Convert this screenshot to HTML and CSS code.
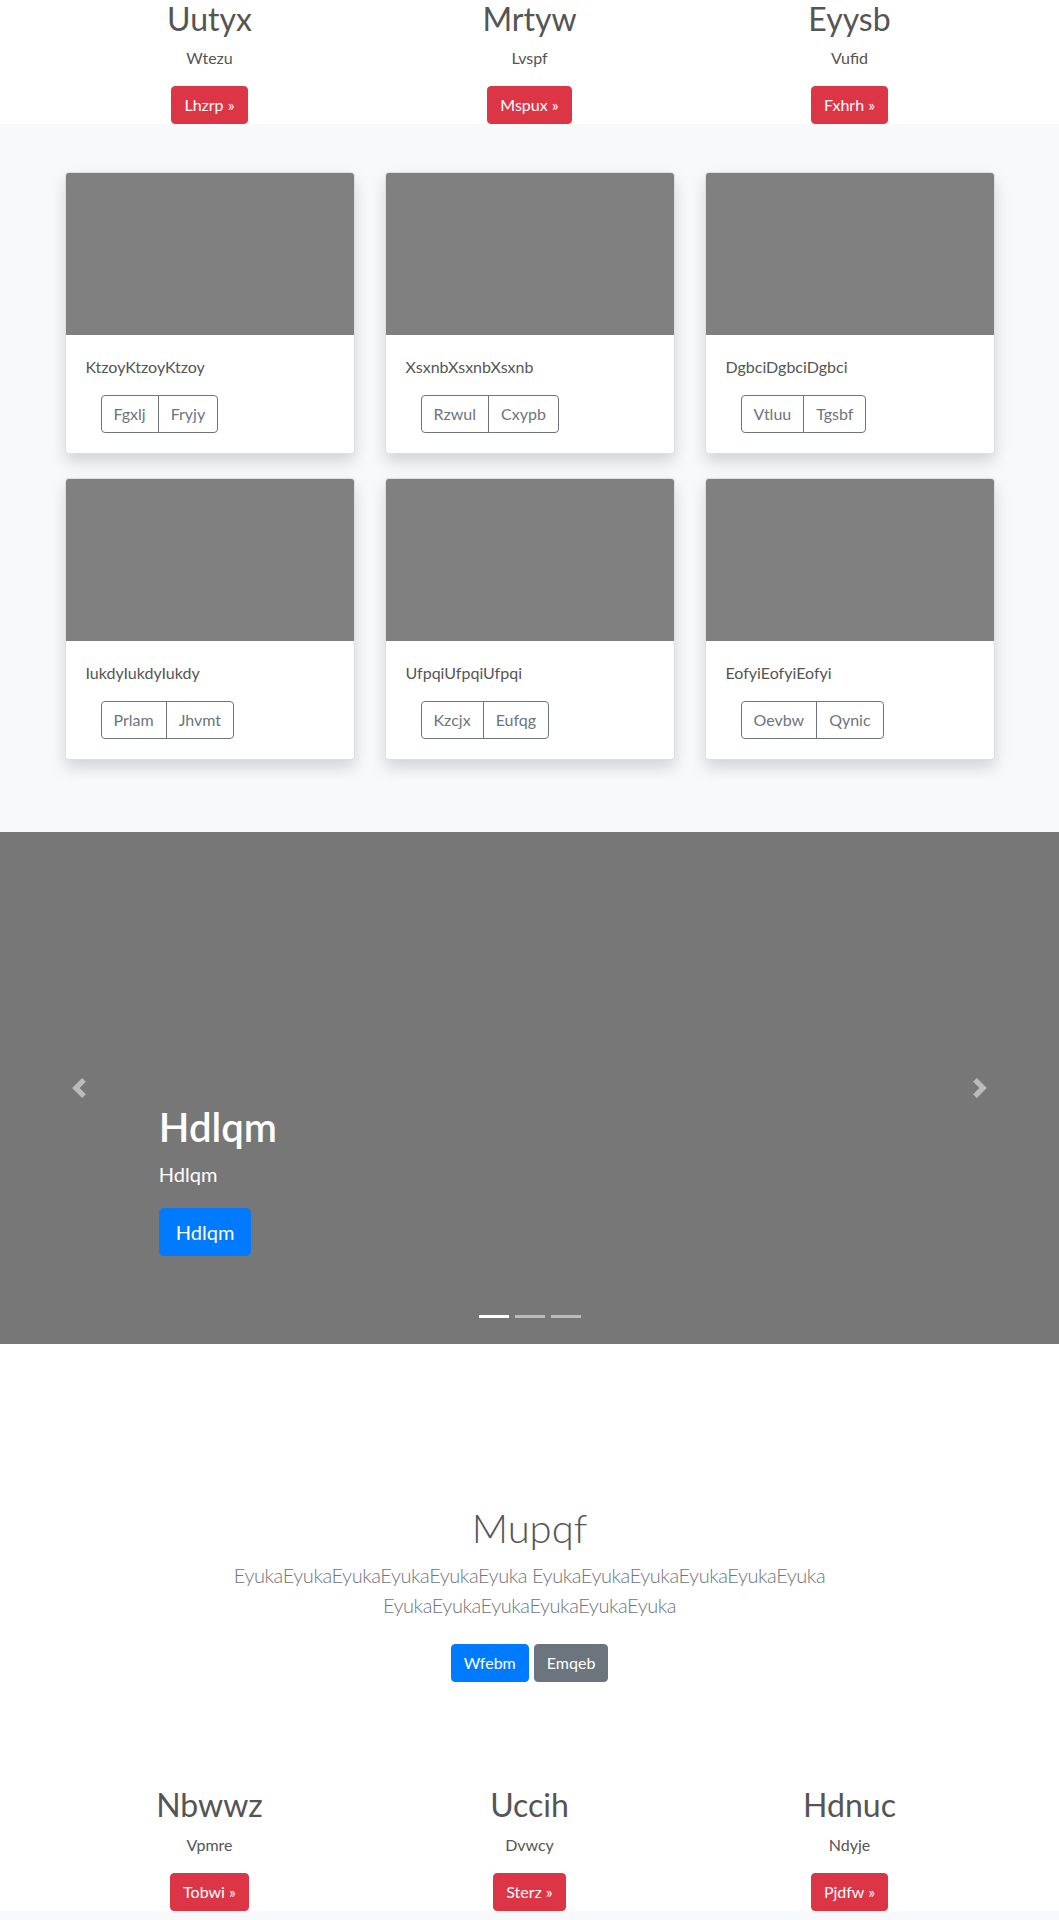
FILE: index.html
```html
<!DOCTYPE html>
<html lang="en">
<head>
<meta charset="utf-8">
<title>Page</title>
<link rel="stylesheet" href="styles.css">
</head>
<body>
<section class="features">
  <div class="container trio">
    <div class="feature"><h2>Uutyx</h2><p>Wtezu</p><a class="btn btn-danger" href="#">Lhzrp &raquo;</a></div>
    <div class="feature"><h2>Mrtyw</h2><p>Lvspf</p><a class="btn btn-danger" href="#">Mspux &raquo;</a></div>
    <div class="feature"><h2>Eyysb</h2><p>Vufid</p><a class="btn btn-danger" href="#">Fxhrh &raquo;</a></div>
  </div>
</section>

<section class="album">
  <div class="container cards">
    <div class="card">
      <div class="card-img"></div>
      <div class="card-body">
        <p class="card-text">KtzoyKtzoyKtzoy</p>
        <div class="btn-row"><div class="btn-group"><button class="btn btn-outline" type="button">Fgxlj</button><button class="btn btn-outline" type="button">Fryjy</button></div></div>
      </div>
    </div>
    <div class="card">
      <div class="card-img"></div>
      <div class="card-body">
        <p class="card-text">XsxnbXsxnbXsxnb</p>
        <div class="btn-row"><div class="btn-group"><button class="btn btn-outline" type="button">Rzwul</button><button class="btn btn-outline" type="button">Cxypb</button></div></div>
      </div>
    </div>
    <div class="card">
      <div class="card-img"></div>
      <div class="card-body">
        <p class="card-text">DgbciDgbciDgbci</p>
        <div class="btn-row"><div class="btn-group"><button class="btn btn-outline" type="button">Vtluu</button><button class="btn btn-outline" type="button">Tgsbf</button></div></div>
      </div>
    </div>
    <div class="card">
      <div class="card-img"></div>
      <div class="card-body">
        <p class="card-text">IukdyIukdyIukdy</p>
        <div class="btn-row"><div class="btn-group"><button class="btn btn-outline" type="button">Prlam</button><button class="btn btn-outline" type="button">Jhvmt</button></div></div>
      </div>
    </div>
    <div class="card">
      <div class="card-img"></div>
      <div class="card-body">
        <p class="card-text">UfpqiUfpqiUfpqi</p>
        <div class="btn-row"><div class="btn-group"><button class="btn btn-outline" type="button">Kzcjx</button><button class="btn btn-outline" type="button">Eufqg</button></div></div>
      </div>
    </div>
    <div class="card">
      <div class="card-img"></div>
      <div class="card-body">
        <p class="card-text">EofyiEofyiEofyi</p>
        <div class="btn-row"><div class="btn-group"><button class="btn btn-outline" type="button">Oevbw</button><button class="btn btn-outline" type="button">Qynic</button></div></div>
      </div>
    </div>
  </div>
</section>

<section class="carousel">
  <ol class="carousel-indicators">
    <li class="active"></li>
    <li></li>
    <li></li>
  </ol>
  <div class="carousel-caption">
    <h1>Hdlqm</h1>
    <p class="caption-sub">Hdlqm</p>
    <div class="caption-actions"><a class="btn btn-lg btn-primary" href="#">Hdlqm</a></div>
  </div>
  <a class="carousel-control prev" href="#" aria-label="Previous">
    <svg width="20" height="20" viewBox="0 0 8 8" fill="#fff"><path d="M5.25 0l-4 4 4 4 1.5-1.5L4.25 4l2.5-2.5L5.25 0z"/></svg>
  </a>
  <a class="carousel-control next" href="#" aria-label="Next">
    <svg width="20" height="20" viewBox="0 0 8 8" fill="#fff"><path d="M2.75 0l-1.5 1.5L3.75 4l-2.5 2.5L2.75 8l4-4-4-4z"/></svg>
  </a>
</section>

<section class="jumbo-wrap">
  <div class="jumbotron">
    <div class="narrow">
      <h1>Mupqf</h1>
      <p class="lead">EyukaEyukaEyukaEyukaEyukaEyuka EyukaEyukaEyukaEyukaEyukaEyuka EyukaEyukaEyukaEyukaEyukaEyuka</p>
      <div class="actions"><a class="btn btn-primary" href="#">Wfebm</a><a class="btn btn-secondary" href="#">Emqeb</a></div>
    </div>
  </div>
</section>

<section class="features">
  <div class="container trio">
    <div class="feature"><h2>Nbwwz</h2><p>Vpmre</p><a class="btn btn-danger" href="#">Tobwi &raquo;</a></div>
    <div class="feature"><h2>Uccih</h2><p>Dvwcy</p><a class="btn btn-danger" href="#">Sterz &raquo;</a></div>
    <div class="feature"><h2>Hdnuc</h2><p>Ndyje</p><a class="btn btn-danger" href="#">Pjdfw &raquo;</a></div>
  </div>
</section>

<footer class="footer-band"></footer>
</body>
</html>
```

FILE: styles.css
```css
* {
  box-sizing: border-box;
}

html,
body {
  margin: 0;
  padding: 0;
}

body {
  font-family: Lato, "Segoe UI", Roboto, "Liberation Sans", sans-serif;
  font-size: 16px;
  line-height: 1.5;
  color: #555;
  background: #fff;
}

.container {
  width: 960px;
  margin: 0 auto;
  padding: 0 15px;
}

/* three column features */
.trio {
  display: grid;
  grid-template-columns: repeat(3, 290px);
  column-gap: 30px;
}

.feature {
  display: flex;
  flex-direction: column;
  align-items: center;
  text-align: center;
}

.feature h2 {
  font-size: 32px;
  font-weight: 400;
  line-height: 1.2;
  margin: 0 0 8px;
}

.feature p {
  margin: 0 0 16px;
}

/* buttons */
.btn {
  display: inline-block;
  font-family: inherit;
  font-size: 16px;
  font-weight: 400;
  line-height: 1.5;
  padding: 6px 12px;
  border: 1px solid transparent;
  border-radius: 4px;
  text-decoration: none;
  text-align: center;
  cursor: pointer;
  background: transparent;
}

.btn-danger {
  background: #dc3545;
  border-color: #dc3545;
  color: #fff;
}

.btn-primary {
  background: #007bff;
  border-color: #007bff;
  color: #fff;
}

.btn-secondary {
  background: #6c757d;
  border-color: #6c757d;
  color: #fff;
}

.btn-outline {
  color: #6c757d;
  border-color: #6c757d;
  background: transparent;
}

.btn-lg {
  font-size: 20px;
  padding: 8px 16px;
  border-radius: 4.8px;
}

/* album */
.album {
  background: #f8f9fa;
  padding: 48px 0 72px;
}

.cards {
  display: grid;
  grid-template-columns: repeat(3, 290px);
  column-gap: 30px;
  row-gap: 24px;
}

.card {
  background: #fff;
  border: 1px solid rgba(0, 0, 0, 0.125);
  border-radius: 4px;
  overflow: hidden;
  box-shadow: 0 8px 16px rgba(0, 0, 0, 0.15);
}

.card-img {
  height: 162px;
  background: #808080;
}

.card-body {
  padding: 20px;
}

.card-text {
  margin: 0 0 16px;
}

.btn-row {
  display: flex;
  padding-left: 15px;
}

.btn-group {
  display: inline-flex;
}

.btn-group .btn + .btn {
  margin-left: -1px;
}

.btn-group .btn:first-child {
  border-radius: 4px 0 0 4px;
}

.btn-group .btn:last-child {
  border-radius: 0 4px 4px 0;
}

/* carousel */
.carousel {
  position: relative;
  height: 512px;
  background: #777;
  margin-bottom: 64px;
  overflow: hidden;
}

.carousel-indicators {
  position: absolute;
  left: 15%;
  right: 15%;
  bottom: 0;
  display: flex;
  justify-content: center;
  list-style: none;
  margin: 0 0 16px;
  padding: 0;
  z-index: 15;
}

.carousel-indicators li {
  box-sizing: content-box;
  width: 30px;
  height: 3px;
  margin: 0 3px;
  background: #fff;
  background-clip: padding-box;
  border-top: 10px solid transparent;
  border-bottom: 10px solid transparent;
  opacity: 0.5;
}

.carousel-indicators li.active {
  opacity: 1;
}

.carousel-caption {
  position: absolute;
  left: 15%;
  right: 15%;
  bottom: 48px;
  padding: 20px 0;
  color: #fff;
  text-align: left;
  z-index: 10;
}

.carousel-caption h1 {
  font-size: 40px;
  font-weight: 600;
  line-height: 1.2;
  margin: 0 0 8px;
}

.caption-sub {
  font-size: 20px;
  line-height: 1.5;
  margin: 0 0 19px;
}

.caption-actions {
  display: flex;
  margin-bottom: 20px;
}

.carousel-control {
  position: absolute;
  top: 0;
  bottom: 0;
  width: 15%;
  display: flex;
  align-items: center;
  justify-content: center;
  opacity: 0.5;
  z-index: 5;
}

.carousel-control.prev {
  left: 0;
}

.carousel-control.next {
  right: 0;
}

/* jumbotron */
.jumbo-wrap {
  padding: 48px 0;
}

.jumbotron {
  padding: 48px 0;
  text-align: center;
}

.narrow {
  max-width: 660px;
  margin: 0 auto;
  padding: 0 15px;
}

.jumbotron h1 {
  font-size: 40px;
  font-weight: 300;
  line-height: 1.2;
  margin: 0 0 8px;
}

.lead {
  font-size: 20px;
  font-weight: 300;
  line-height: 1.5;
  letter-spacing: -0.45px;
  color: #6c757d;
  margin: 0 0 16px;
}

.actions {
  display: flex;
  justify-content: center;
  gap: 5px;
  padding: 8px 0;
}

.footer-band {
  height: 9px;
  background: #f8f9fa;
}
```
